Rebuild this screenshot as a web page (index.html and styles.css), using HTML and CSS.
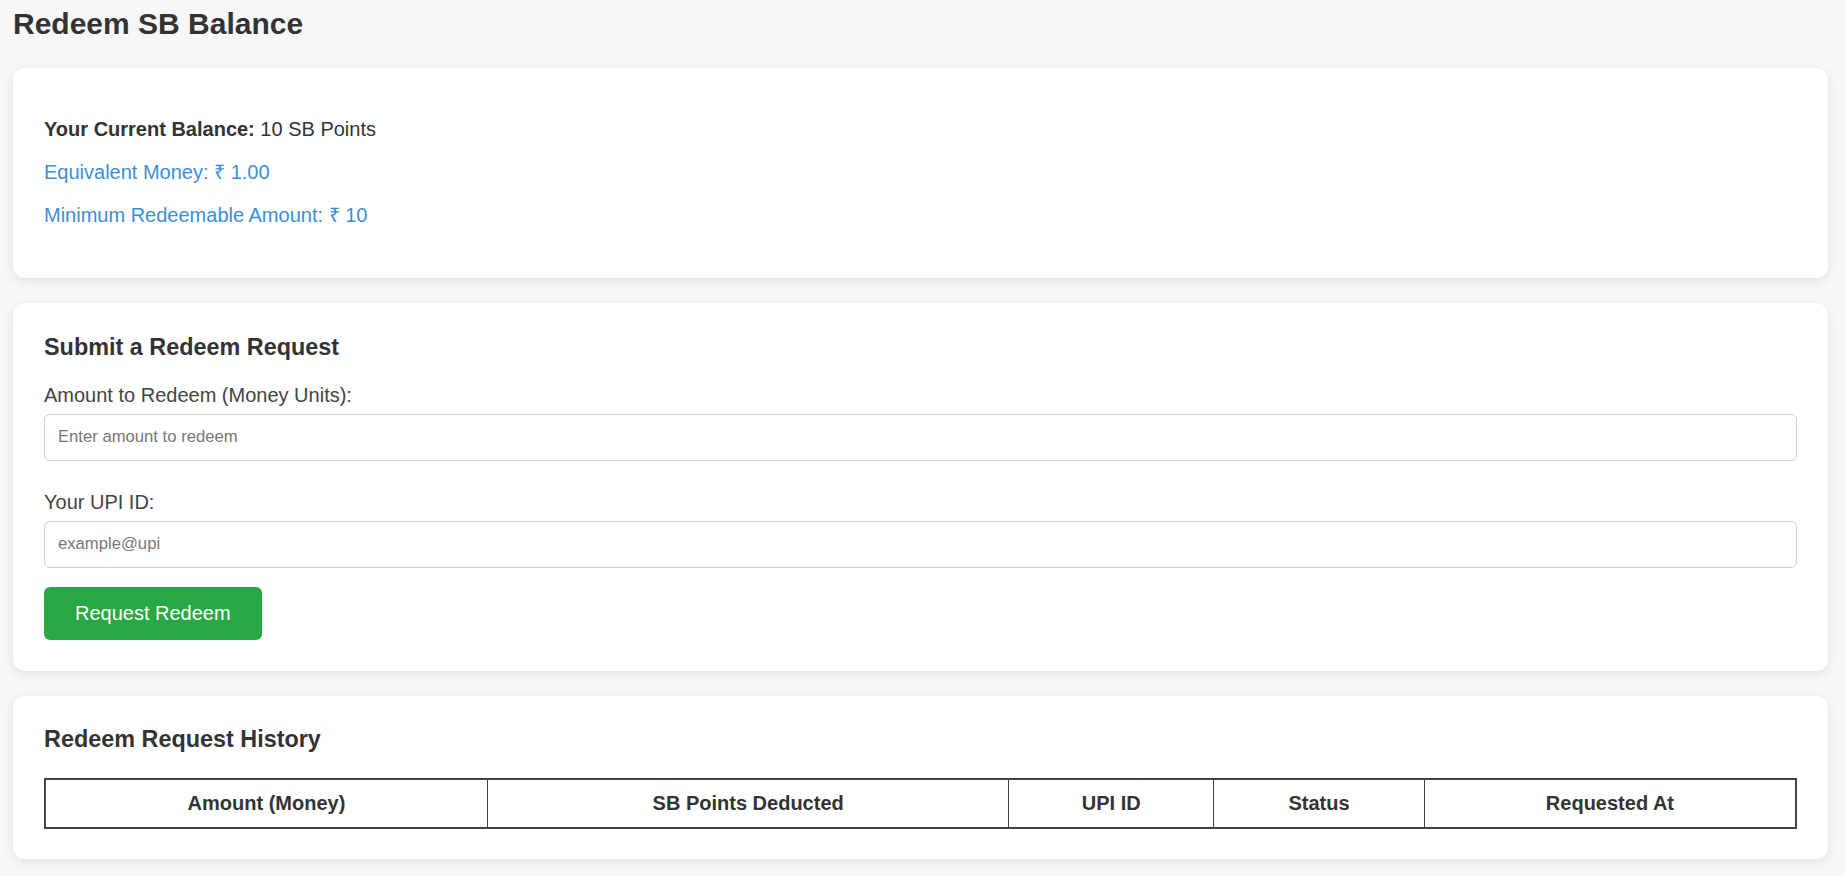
FILE: index.html
```html
<!DOCTYPE html>
<html lang="en">
<head>
<meta charset="utf-8">
<title>Redeem SB Balance</title>
<link rel="stylesheet" href="styles.css">
</head>
<body>
<main class="page">
  <h1 class="page-title">Redeem SB Balance</h1>

  <section class="card card-balance">
    <p class="line"><strong>Your Current Balance:</strong> 10 SB Points</p>
    <p class="line info">Equivalent Money: ₹ 1.00</p>
    <p class="line info">Minimum Redeemable Amount: ₹ 10</p>
  </section>

  <section class="card card-form">
    <h3 class="card-title">Submit a Redeem Request</h3>
    <form class="form">
      <div class="field">
        <label class="label" for="amount">Amount to Redeem (Money Units):</label>
        <input class="input" id="amount" type="number" placeholder="Enter amount to redeem">
      </div>
      <div class="field field-last">
        <label class="label" for="upi">Your UPI ID:</label>
        <input class="input" id="upi" type="text" placeholder="example@upi">
      </div>
      <button class="btn" type="button">Request Redeem</button>
    </form>
  </section>

  <section class="card card-history">
    <h3 class="card-title">Redeem Request History</h3>
    <table class="history">
      <colgroup>
        <col class="c1"><col class="c2"><col class="c3"><col class="c4"><col class="c5">
      </colgroup>
      <thead>
        <tr>
          <th>Amount (Money)</th>
          <th>SB Points Deducted</th>
          <th>UPI ID</th>
          <th>Status</th>
          <th>Requested At</th>
        </tr>
      </thead>
      <tbody></tbody>
    </table>
  </section>
</main>
</body>
</html>
```

FILE: styles.css
```css
* { box-sizing: border-box; }

html, body {
  margin: 0;
  padding: 0;
  background: #f7f7f7;
}

body {
  font-family: "Liberation Sans", Arial, sans-serif;
  font-size: 20px;
  color: #333;
}

.page {
  padding: 7px 17px 20px 13px;
}

.page-title {
  font-size: 30px;
  font-weight: bold;
  color: #333;
  margin: 0 0 26px 0;
  line-height: 34.5px;
}

.card {
  background: #fff;
  border-radius: 12px;
  box-shadow: 0 3px 12px rgba(0, 0, 0, 0.09);
  padding: 30px 31px;
  margin-bottom: 25px;
}

.card-balance {
  padding-top: 30px;
  padding-bottom: 31px;
}

.card-form {
  padding-top: 31px;
  padding-bottom: 31px;
}

.line {
  margin: 20px 0;
  line-height: 23px;
}

.info {
  color: #3a8fd9;
}

.card-title {
  font-size: 23.4px;
  font-weight: bold;
  margin: 0 0 23.4px 0;
  line-height: 27px;
  color: #333;
}

.form {
  display: block;
  margin: 0;
}

.field {
  margin-bottom: 30px;
}

.field-last {
  margin-bottom: 19px;
}

.label {
  display: block;
  line-height: 23px;
  margin-bottom: 7px;
  color: #444;
}

.input {
  display: block;
  width: 100%;
  height: 47px;
  padding: 0 13px;
  border: 1px solid #cfcfcf;
  border-radius: 6px;
  font-family: "Liberation Sans", Arial, sans-serif;
  font-size: 16.67px;
  color: #333;
  background: #fff;
  outline: none;
}

.input::placeholder {
  color: #777;
}

.btn {
  display: block;
  height: 53px;
  padding: 0 31px;
  border: none;
  border-radius: 6px;
  background: #28a745;
  color: #fff;
  font-family: "Liberation Sans", Arial, sans-serif;
  font-size: 20px;
  cursor: pointer;
}

.history {
  width: 100%;
  margin-top: 25px;
  border-collapse: collapse;
  table-layout: fixed;
  border: 2px solid #444;
}

.history th {
  border: 1px solid #444;
  padding: 12px 10px;
  font-size: 20px;
  font-weight: bold;
  line-height: 23px;
  text-align: center;
  color: #333;
}

.c1 { width: 25.27%; }
.c2 { width: 29.78%; }
.c3 { width: 11.69%; }
.c4 { width: 12.04%; }
.c5 { width: 21.22%; }
```
